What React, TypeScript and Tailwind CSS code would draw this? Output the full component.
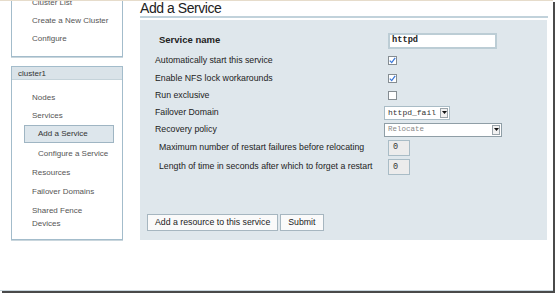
import React from "react";

const sideItems = ["Nodes", "Services"];

function Check({ on }: { on?: boolean }) {
  return (
    <div className="ml-[4px] w-[9px] h-[9px] border border-[#858d92] bg-white flex items-center justify-center">
      {on && (
        <svg width="7" height="7" viewBox="0 0 7 7">
          <path d="M0.8 3.6 L2.7 5.6 L6.2 0.8" fill="none" stroke="#3b78d8" strokeWidth="1.3" />
        </svg>
      )}
    </div>
  );
}

function Arrow() {
  return (
    <div className="w-[8px] h-[10px] border border-[#9aa4aa] bg-[#f1f1f1] flex items-center justify-center">
      <svg width="5" height="3" viewBox="0 0 5 3">
        <path d="M0 0 L5 0 L2.5 3 Z" fill="#111" />
      </svg>
    </div>
  );
}

function Row({ label, bold, indent, h, children }: { label: string; bold?: boolean; indent?: boolean; h: string; children?: React.ReactNode }) {
  return (
    <div className={`flex items-center ${h}`}>
      <div
        className={`w-[229px] shrink-0 text-[#222] ${indent ? "pl-[4px]" : ""} ${bold ? "font-bold text-[9.5px]" : "text-[8.75px]"}`}
      >
        {label}
      </div>
      {children}
    </div>
  );
}

function NumBox() {
  return (
    <div className="ml-[4px] w-[22px] h-[16px] border border-[#a9bcc6] bg-[#ececec] flex items-center pl-[4px] font-['Liberation_Mono',monospace] text-[8.5px] text-[#333]">
      0
    </div>
  );
}

export default function App() {
  return (
    <div className="w-[557px] h-[296px] bg-white overflow-hidden font-['Liberation_Sans',Arial,sans-serif]">
      <div className="w-[553px] h-[291px] bg-white border-t border-t-[#e6dccb] border-b border-b-[#c9d6dd] shadow-[2px_2px_0_#4a4a4a] flex overflow-hidden">
        {/* sidebar */}
        <div className="w-[140px] shrink-0 pl-[11px]">
          <div className="-mt-[13px] w-[112px] border border-[#a3bccb] bg-white pt-[5px] pb-[8px] pl-[20px] text-[8px] text-[#555] shadow-[0_1px_0_#c9d6dd]">
            <div className="h-[18px] leading-[18px]">Cluster List</div>
            <div className="h-[18px] leading-[18px]">Create a New Cluster</div>
            <div className="h-[18px] leading-[18px]">Configure</div>
          </div>
          <div className="mt-[9px] w-[112px] border border-[#a3bccb] bg-white text-[8px] text-[#555] shadow-[0_1px_0_#c9d6dd]">
            <div className="h-[13px] bg-[#dae3e9] border-b border-[#c5d3da] pl-[6px] leading-[13px] text-[#333]">
              cluster1
            </div>
            <div className="pt-[9px] pb-[9px]">
              {sideItems.map((s) => (
                <div key={s} className="h-[18px] leading-[18px] pl-[20px]">
                  {s}
                </div>
              ))}
              <div className="ml-[12px] w-[90px] h-[18px] border border-[#9fb5c3] bg-[#dde6ec] pl-[13px] leading-[16px] text-[#333]">
                Add a Service
              </div>
              <div className="h-[19px] leading-[19px] pl-[26px] mt-[1px]">Configure a Service</div>
              <div className="h-[19px] leading-[19px] pl-[20px]">Resources</div>
              <div className="h-[19px] leading-[19px] pl-[20px]">Failover Domains</div>
              <div className="pt-[3px] leading-[13px] pl-[20px]">
                Shared Fence
                <br />
                Devices
              </div>
            </div>
          </div>
        </div>

        {/* main */}
        <div className="w-[408px] shrink-0">
          <div className="h-[17px] border-b-2 border-[#c1d2db] text-[14px] leading-[15px] tracking-[-0.45px] text-[#222]">
            Add a Service
          </div>
          <div className="mt-[2px] w-[407px] h-[220px] bg-[#dfe7ec] pt-[10px]">
            <div className="pl-[15px]">
              <Row label="Service name" bold indent h="h-[21px]">
                <div className="ml-[4px] w-[109px] h-[16px] border-2 border-[#bccdd5] bg-white flex items-center pl-[2px] font-['Liberation_Mono',monospace] font-bold text-[8.7px] text-[#222]">
                  httpd
                </div>
              </Row>
              <Row label="Automatically start this service" h="h-[19px]">
                <Check on />
              </Row>
              <Row label="Enable NFS lock workarounds" h="h-[17px]">
                <Check on />
              </Row>
              <Row label="Run exclusive" h="h-[17px]">
                <Check />
              </Row>
              <Row label="Failover Domain" h="h-[17px]">
                <div className="w-[66px] h-[14px] border border-[#a9bcc6] bg-white flex items-center justify-between pl-[3px] pr-[1px] font-['Liberation_Mono',monospace] text-[8px] text-[#333]">
                  <span>httpd_fail</span>
                  <Arrow />
                </div>
              </Row>
              <Row label="Recovery policy" h="h-[17px]">
                <div className="w-[118px] h-[14px] border border-[#8f9ea6] bg-white flex items-center justify-between pl-[3px] pr-[1px] font-['Liberation_Mono',monospace] text-[7.5px] text-[#888]">
                  <span>Relocate</span>
                  <Arrow />
                </div>
              </Row>
              <Row label="Maximum number of restart failures before relocating" indent h="h-[19px]">
                <NumBox />
              </Row>
              <Row label="Length of time in seconds after which to forget a restart" indent h="h-[20px]">
                <NumBox />
              </Row>
            </div>
            <div className="mt-[37px] pl-[7px] flex gap-[2px] text-[8.75px] text-[#222]">
              <div className="h-[17px] border border-[#a6b6c0] bg-[#fafafa] px-[7px] leading-[15px]">
                Add a resource to this service
              </div>
              <div className="h-[17px] border border-[#a6b6c0] bg-[#fafafa] px-[7px] leading-[15px]">
                Submit
              </div>
            </div>
          </div>
        </div>
      </div>
    </div>
  );
}
